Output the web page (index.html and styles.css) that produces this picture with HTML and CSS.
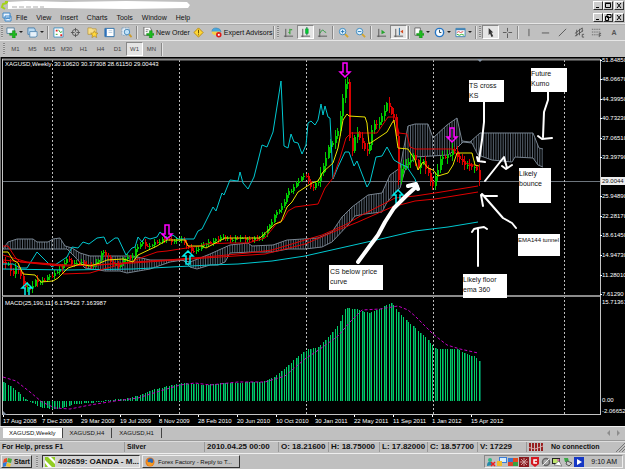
FILE: index.html
```html
<!DOCTYPE html>
<html lang="en">
<head>
<meta charset="utf-8">
<title>XAGUSD,Weekly</title>
<link rel="stylesheet" href="styles.css">
</head>
<body>
<header class="title">
  <svg class="scribble" viewBox="0 0 195 11"><path d="M7 3 3 4 2 7l3 2M5 2h3" stroke="#a4d21c" stroke-width="2" fill="none"/><path d="M8 2 26 1l40 1 60-1 61 1 3 3-2 3-62 1-82-1-36 1z" fill="#fff"/><path d="M12 7h32" stroke="#aaa" stroke-dasharray="5 2"/></svg>
  <div class="winbtns"><button aria-label="Minimize"><svg viewBox="0 0 8 7"><path d="M2 5.500h3"/></svg></button><button aria-label="Maximize"><svg viewBox="0 0 8 7"><path d="M1.500 1.500h5v4h-5zM1 1h6"/></svg></button><button class="apart" aria-label="Close"><svg viewBox="0 0 8 7"><path d="m2 1 4 5m0-5L2 6"/></svg></button></div>
</header>
<nav class="menu">
  <svg class="appicon" viewBox="0 0 10 10"><path d="M1 1h7v5H1zM3 4h6v5H3z" fill="#eef6ff" stroke="#3a86c8"/><path d="M4 7l2-1 2 1" stroke="#3a86c8" fill="none"/></svg>
  <button>File</button><button>View</button><button>Insert</button><button>Charts</button><button>Tools</button><button>Window</button><button>Help</button>
  <div class="winbtns"><button aria-label="Minimize chart"><svg viewBox="0 0 8 7"><path d="M2 5.500h3"/></svg></button><button aria-label="Restore chart"><svg viewBox="0 0 8 7"><path d="M3 .5h4v3H3zM1.500 2.500h3v4h-3z"/></svg></button><button class="apart" aria-label="Close chart"><svg viewBox="0 0 8 7"><path d="m2 1 4 5m0-5L2 6"/></svg></button></div>
</nav>
<div class="toolbar" role="toolbar">
  <i class="grip"></i>
  <button class="drop" aria-label="New chart"><svg viewBox="0 0 12 12"><path d="M1 1h8v6H1z" fill="#eef6fb" stroke="#5580a0"/><path d="M7 4h3v3h2v2h-2v3H7V9H4V7h3z" fill="#1dbb1d" stroke="#08790d" stroke-width=".5"/></svg></button>
  <button class="drop" aria-label="Profiles"><svg viewBox="0 0 12 12"><path d="M1 1h7l1 2v5H1z" fill="#b9daf2" stroke="#4a80ad"/><path d="M3 5h8v5l-2 1H3z" fill="#e7f1fa" stroke="#5a8db5"/></svg></button>
  <i class="sep"></i>
  <button aria-label="Market Watch"><svg viewBox="0 0 12 12"><path d="M1 1h10v10H1z" fill="#fff" stroke="#3f93c4"/><path d="M3 3h2v2H3zM8 8h2v2H8z" fill="#e02020"/><path d="M6 3l2 3 2-1M3 8h2" stroke="#2a2" fill="none"/></svg></button>
  <button aria-label="Data Window"><svg viewBox="0 0 12 12"><circle cx="6" cy="6" r="3.500" fill="none" stroke="#555"/><path d="M6 1v4M6 7v4M1 6h4M7 6h4" stroke="#555"/></svg></button>
  <button aria-label="Navigator"><svg viewBox="0 0 12 12"><path d="M1 1h4l1 1h4v6H1z" fill="#f8df8a" stroke="#b18b2c" stroke-width=".7"/><path d="m8 4 1.200 2.500 2.800.3-2 1.800.6 2.900L8 10l-2.600 1.500.6-2.900-2-1.800 2.800-.3z" fill="#ffd83a" stroke="#a37813" stroke-width=".6"/></svg></button>
  <button aria-label="Terminal"><svg viewBox="0 0 12 12"><path d="M1 1.500h10v9H1z" fill="#fff" stroke="#286da8"/><path d="M2 2v8" stroke="#2c70bb" stroke-width="2"/><path d="M5 4h4M5 6h4" stroke="#b8cddf"/></svg></button>
  <button aria-label="Strategy Tester"><svg viewBox="0 0 12 12"><path d="M1 1h8v8H1z" fill="#e4eef7" stroke="#7fa0bd" stroke-dasharray="2 1"/><circle cx="6.500" cy="5.500" r="3" fill="#bfe2fa" stroke="#4585b5"/><path d="m9 8 2.500 3" stroke="#cc9c2c" stroke-width="2"/></svg></button>
  <i class="sep"></i>
  <button class="wide"><svg viewBox="0 0 12 12"><path d="M1 0h6l2 2v7H1z" fill="#fff" stroke="#666"/><path d="M3 3h3M3 5h2" stroke="#777"/><path d="M7 4h3v3h2v2h-2v3H7V9H4V7h3z" fill="#1dbb1d" stroke="#08790d" stroke-width=".5"/></svg>New Order</button>
  <button aria-label="MetaEditor"><svg viewBox="0 0 12 12"><path d="m6 1 5 5-5 5-5-5z" fill="#ffd735" stroke="#b98908"/><path d="M6 3v4M6 8v1" stroke="#604800"/></svg></button>
  <button class="wide"><svg viewBox="0 0 12 12"><path d="M1 5q0-4 4.500-4T11 5L6 7z" fill="#48a7de" stroke="#2f78ab" stroke-width=".5"/><path d="M1 5h9v2q-4 4-9 0z" fill="#f1d14c"/><circle cx="8.500" cy="8.500" r="3" fill="#dc1b1b"/><path d="M7.500 7.500h2v2h-2z" fill="#fff"/></svg>Expert Advisors</button>
  <i class="sep"></i><i class="grip"></i>
  <button aria-label="Bar chart"><svg viewBox="0 0 12 12"><path class="ax" d="M3 2v9M1 10h10"/><path d="M7.500 2v6M6 6h1M8 3h2" stroke="#139b13"/></svg></button>
  <button class="on" aria-label="Candlesticks"><svg viewBox="0 0 12 12"><path class="ax" d="M3 2v9M1 10h10"/><path d="M7.500 0v9" stroke="#064"/><path d="M6 2h3v5H6z" fill="#0c3" stroke="#082" stroke-width=".5"/></svg></button>
  <button aria-label="Line chart"><svg viewBox="0 0 12 12"><path class="ax" d="M3 2v9M1 10h10"/><path d="M3 7q3-6 5-2l2 1" fill="none" stroke="#2a9a3a"/></svg></button>
  <i class="sep"></i>
  <button aria-label="Zoom in"><svg viewBox="0 0 12 12"><path d="m7 7 4 4" stroke="#d5a52d" stroke-width="2"/><circle cx="5" cy="5" r="3.500" fill="#e4f5ff" stroke="#3385bf"/><path d="M3 5h4M5 3v4" stroke="#2475b5"/></svg></button>
  <button aria-label="Zoom out"><svg viewBox="0 0 12 12"><path d="m7 7 4 4" stroke="#d5a52d" stroke-width="2"/><circle cx="5" cy="5" r="3.500" fill="#e4f5ff" stroke="#3385bf"/><path d="M3 5h4" stroke="#2475b5"/></svg></button>
  <i class="sep"></i>
  <button aria-label="Auto scroll"><svg viewBox="0 0 12 12"><path class="ax" d="M3 2v9M1 10h10"/><path d="m6 3 4 3-4 2z" fill="#24a42c"/></svg></button>
  <button class="on" aria-label="Chart shift"><svg viewBox="0 0 12 12"><path class="ax" d="M3 2v9M1 10h10"/><path d="M7 1v8" stroke="#17649c"/><path d="m8 5 3-2v4z" fill="#d34a20"/></svg></button>
  <i class="sep"></i>
  <button class="drop" aria-label="Indicators"><svg viewBox="0 0 12 12"><path d="M2 1h6v8H2z" fill="#fff" stroke="#666"/><path d="M7 4h3v3h2v2h-2v3H7V9H4V7h3z" fill="#1dbb1d" stroke="#08790d" stroke-width=".5"/></svg></button>
  <button class="drop" aria-label="Periods"><svg viewBox="0 0 12 12"><circle cx="6" cy="6" r="4.500" fill="#f6fbff" stroke="#2475c5" stroke-width="1.500"/><path d="M6 3v3h2" fill="none" stroke="#245"/></svg></button>
  <button class="drop" aria-label="Templates"><svg viewBox="0 0 12 12"><path d="M1 1.500h10v9H1z" fill="#fff" stroke="#4284b6"/><path d="M1 2.500h10" stroke="#4284b6" stroke-width="2"/><path d="m2 6 2-1 2 1 3-1" fill="none" stroke="#d44"/><path d="m2 8 3 1 2-1 3 1" fill="none" stroke="#2a2"/></svg></button>
  <i class="sep"></i><i class="grip"></i>
  <button class="on" aria-label="Cursor"><svg viewBox="0 0 12 12"><path d="m4 1 5 5H7l2 4-2 1-1.500-4L4 9z" fill="#333"/></svg></button>
  <button aria-label="Crosshair"><svg class="ln" viewBox="0 0 12 12"><path d="M6 1v4M6 7v5M1 6h4M7 6h4"/></svg></button>
  <i class="sep"></i>
  <button aria-label="Vertical line"><svg class="ln" viewBox="0 0 12 12"><path d="M6.500 2v8"/></svg></button>
  <button aria-label="Horizontal line"><svg class="ln" viewBox="0 0 12 12"><path d="M2 6.500h8"/></svg></button>
  <button aria-label="Trendline"><svg class="ln" viewBox="0 0 12 12"><path d="m2 10 8-8"/></svg></button>
  <button aria-label="Channel"><svg class="ln" viewBox="0 0 12 12"><path d="m1 7 8-6M1 10l9-6M3 3v7M6 2v7M9 1v4M9 8h2M9 11h2M9 8v3"/></svg></button>
  <button aria-label="Fibonacci"><svg class="ln" viewBox="0 0 12 12"><path d="M1 2.500h9M1 5.500h9M1 8.500h7" stroke-dasharray="1 1"/><path d="M9 11V7h2M9 9h2"/></svg></button>
  <button class="glyph">A</button>
</div>
<div class="frames" role="toolbar">
  <i class="grip"></i><button>M1</button><button>M5</button><button>M15</button><button>M30</button><button>H1</button><button>H4</button><button>D1</button><button class="on">W1</button><button>MN</button><i class="sep"></i>
</div>
<main>
  <svg id="chart" viewBox="0 57 625 369" role="img" aria-label="XAGUSD weekly chart">
    <rect y="57" width="625" height="369"/>
    <path d="M.5 57v369" stroke="#777"/>
    <g id="kumo"></g>
    <path d="M3 181.500h597" stroke="#6d757d"/>
    <path d="M52.500 60v355M179.500 60v355M306.500 60v355M433.500 60v355M564.500 60v355" stroke="#bbb" stroke-dasharray="2 2"/>
    <g id="candles" shape-rendering="crispEdges"></g>
    <g id="lines" fill="none"></g>
    <g id="macd" shape-rendering="crispEdges"></g>
    <g id="signals" fill="none" stroke-width="1.500"></g>
    <path d="M2 59.500h598M2 296h598" stroke="#8b8b8b" stroke-width="2"/>
    <path d="M2.500 59v237M2.500 297v118M600.500 59v356M2 414.500h599" fill="none" stroke="#c4c4c4"/>
    <path d="M477 59h6l-3 3z" fill="#8795a6"/>
    <path d="M3 411l4 4H3z" fill="#8795a6"/>
    <g id="axis" class="small"></g>
    <g class="small"><text x="5" y="66">XAGUSD,Weekly</text><text x="54" y="66">30.10620 30.37308 28.61150 29.00443</text><text x="5" y="305">MACD(25,190,11) 6.175423 7.163987</text></g>
    <g fill="#fff"><path d="M469 80h35v22h-35zM531 68h36v24h-36zM519 168h32v35h-32zM518 234h42v22h-42zM463 274h44v24h-44zM329 265h54v25h-54z"/></g>
    <g class="note"><text x="469" y="88">TS cross</text><text x="469" y="98">KS</text><text x="531" y="76">Future</text><text x="531" y="86">Kumo</text><text x="519" y="176">Likely</text><text x="519" y="186">bounce</text><text class="small dark" x="518" y="242">EMA144 tunnel</text><text x="463" y="282">Likely floor</text><text x="463" y="292">ema 360</text><text x="330" y="274">CS below price</text><text x="330" y="284">curve</text></g>
    <g class="pen"><path d="M484 102v20l-2 18-3 20M477 157l1 4 7 1"/><path d="M548 92v8l-4 12-1 25M538 136l4 3 10-1"/><path d="m485 181 19-24 3 11M502 166l4 3 6-4"/><path d="m516 228-4-5-9-5-21-24M483 206l-2-11 4 1h12"/><path d="M478 266v-38M472 232l2-3 4-1 6-1 3 2"/></g>
    <path class="pen thick" d="m358 262 11-15 9-12 7-13 9-14 13-13 10-9M408 186l8-2 2 5"/>
    <path d="M601 177h24v8h-24z" fill="#eee"/><text class="small dark" x="602" y="183">29.0044</text>
  </svg>
</main>
<nav class="tabs"><button class="active">XAGUSD,Weekly</button><button>XAGUSD,H4</button><button>XAGUSD,H1</button><span class="scroll"><svg viewBox="0 0 14 6"><path d="M3 0v6L0 3zM10 0l3 3-3 3z" fill="#8d8d8d"/></svg></span></nav>
<footer class="status">
  <span class="words">For Help, press F1</span><span class="words">Silver</span><span>2010.04.25 00:00</span><span>O: 18.21600</span><span>H: 18.75000</span><span>L: 17.82000</span><span>C: 18.57700</span><span>V: 17229</span>
  <span class="words conn"><svg viewBox="0 0 15 8"><path d="M1 0v8M4 0v8M7 0v8M10 0v8M13 0v8" stroke="#982020" stroke-width="2"/><path d="M0 4.500 6 6l8-3" stroke="#d9a5a5" fill="none"/></svg>No connection<svg class="size" viewBox="0 0 9 9"><path d="m0 9 9-9M3 9l6-6M6 9l3-3" stroke="#777"/></svg></span>
</footer>
<footer class="taskbar">
  <button class="start"><svg viewBox="0 0 10 10"><path d="m1 2 3-1v4L0 6z" fill="#e84b25"/><path d="m5 1 4 1-1 4-4-1z" fill="#48a93e"/><path d="m0 6 4-1-1 4-3 1z" fill="#3179d6"/><path d="m4 6 4 1-1 3-4-1z" fill="#f2c52c"/></svg>Start</button>
  <i class="grip"></i>
  <button class="task current"><svg viewBox="0 0 10 10"><path d="M0 0h10v10H0z" fill="#fff"/><path d="M0 0h3l7 7v3H7L0 3zM6 0h4v4zM0 6l3 4H0z" fill="#92cd25"/></svg>402659: OANDA - M...</button>
  <button class="task"><svg viewBox="0 0 10 10"><circle cx="5" cy="5" r="4.500" fill="#e67515"/><circle cx="5.500" cy="4" r="2.700" fill="#2866b5"/><path d="M1 3q1 3 4 2 2 2 4 0-1 4-4 4T1 3" fill="#f39b24"/></svg>Forex Factory - Reply to T...</button>
  <div class="tray">
    <svg viewBox="0 0 10 10"><circle cx="4" cy="3" r="2" fill="#3b8"/><path d="M1 9q0-5 4-4l3 3z" fill="#28a"/><path d="m5 5 4 4m0-4L5 9" stroke="#e22" stroke-width="1.500"/></svg>
    <svg viewBox="0 0 10 10"><path d="M2 0h8v6H2z" fill="#3b7dd8"/><path d="M3 1h6v4H3z" fill="#d9efff"/><path d="M0 4h5v5H0z" fill="#f1bd2b"/></svg>
    <svg viewBox="0 0 10 10"><path d="M0 1h5v4H0z" fill="#3978d0"/><path d="M5 1h5v4H5z" fill="#e44c20"/><path d="M0 5h5v4H0z" fill="#e0402b"/><path d="M5 5h5v4H5z" fill="#38a243"/></svg>
    <svg viewBox="0 0 10 10"><path d="M0 0h10v10H0z" fill="#8a1b20"/><path d="m2 2 6 6m0-6L2 8M5 1v8M1 5h8" stroke="#d0a0a0"/></svg>
    <svg viewBox="0 0 10 10"><path d="M1 0h8v7l-4 3-4-3z" fill="#d41820"/><path d="M7 3H4v3h3" stroke="#fff" stroke-width="1.500" fill="none"/></svg>
    <svg viewBox="0 0 10 10"><circle cx="5" cy="5" r="3.500" fill="#aaa" stroke="#666" stroke-width="1.500"/><path d="m2 8 6-6" stroke="#eee"/></svg>
    <svg viewBox="0 0 10 10"><path d="M0 1h8v6H0z" fill="#222"/><path d="M1 2h6v4H1z" fill="#bde46b"/><path d="m2 8 5-4 3 5z" fill="#fff" stroke="#555" stroke-width=".6"/><path d="M5 3h3" stroke="#d3c"/></svg>
    <svg viewBox="0 0 10 10"><path d="M1 1h4l1 4H2z" fill="#3aa845"/><path d="m4 4 5 2-3 3-3-2z" fill="#ccc" stroke="#555"/></svg>
    <svg viewBox="0 0 10 10"><path d="M0 0h10v10H0z" fill="#1537c4"/><path d="m3 2 5 3-5 3z" fill="#fff"/></svg>
    <time>9:10 AM</time>
  </div>
</footer>
<script src="chart.js"></script>
</body>
</html>
```
FILE: styles.css
```css
* { box-sizing: border-box; }
body { margin: 0; background: #c0c0c0; color: #111; font: 7px/1 "Liberation Sans", sans-serif; overflow-x: hidden; }
button { border: 0; padding: 0; background: none; color: inherit; font: inherit; white-space: nowrap; }
svg { display: block; flex: none; }
.title { height: 11px; display: flex; justify-content: space-between; align-items: center; }
.scribble { width: 195px; height: 11px; }
.winbtns { display: flex; margin-left: auto; padding-right: 1px; }
.winbtns button { width: 10px; height: 9px; background: #ccc; border: 1px solid; border-color: #fff #333 #333 #fff; }
.winbtns .apart { margin-left: 1px; }
.winbtns svg { width: 8px; height: 7px; fill: none; stroke: #000; }
.menu { height: 12px; display: flex; align-items: center; gap: 9px; }
.appicon { width: 10px; height: 10px; margin: 0 -5px 0 2px; }
.toolbar, .frames { display: flex; align-items: center; border-top: 1px solid #e6e6e6; }
.toolbar { height: 17px; box-shadow: inset 0 1px #aaa; }
.toolbar button { width: 17px; height: 14px; display: flex; align-items: center; justify-content: center; flex: none; }
.toolbar svg { width: 11px; height: 11px; }
.toolbar .drop { width: 21px; gap: 2px; }
.drop::after { content: ""; border: 2px solid transparent; border-top-color: #222; border-bottom: 0; }
.toolbar .wide { width: auto; gap: 2px; padding: 0 0 0 4px; }
.toolbar .on, .frames .on { background: #e4e4e4; border: 1px solid; border-color: #888 #fff #fff #888; }
.toolbar .glyph { color: #555; font-weight: bold; }
.ax { stroke: #555; fill: none; }
.ln { stroke: #555; fill: none; }
.grip { width: 2px; height: 12px; margin: 0 1px; flex: none; background: repeating-linear-gradient(#888 0 1px, #ccc 1px 2px); }
.sep { width: 2px; height: 13px; margin: 0 1px; flex: none; border-left: 1px solid #888; border-right: 1px solid #e4e4e4; }
.frames { height: 17px; font-size: 6px; color: #444; }
.frames button { width: 17px; height: 14px; }
.frames .grip { margin: 0 2px 0 3px; }
#chart { width: 100%; height: auto; }
.note { font-size: 7px; fill: #111; }
.small { font-size: 6px; fill: #fff; }
.dark { fill: #111; }
.pen { fill: none; stroke: #fff; stroke-width: 2; stroke-linecap: round; stroke-linejoin: round; }
.thick { stroke-width: 4; }
.tabs { height: 14px; display: flex; align-items: flex-start; padding: 1px 4px 0 3px; border-top: 1px solid #eee; background: #c0c0c0; font-size: 6px; }
.tabs button { height: 10px; padding: 0 7px; border-right: 1px solid #444; }
.tabs .active { background: #fff; padding: 0 6px; }
.scroll { margin: 2px 0 0 auto; }
.scroll svg { width: 14px; height: 6px; }
.status { height: 13px; display: grid; grid-template-columns: 124fr 80fr 74fr 50fr 51fr 48fr 50fr 49fr 99fr; align-items: center; border-top: 1px solid #999; box-shadow: inset 0 1px #ddd; font-weight: bold; font-size: 8px; white-space: nowrap; }
.status span { height: 10px; line-height: 10px; padding-left: 2px; border-left: 1px solid #999; }
.status span:first-child { border: 0; }
.status .words { font-size: 7px; }
.status .conn { display: flex; align-items: center; gap: 7px; }
.conn svg { width: 15px; height: 8px; }
.conn .size { width: 9px; height: 9px; margin-left: auto; }
.taskbar { height: 16px; display: flex; align-items: center; gap: 2px; padding: 0 2px 0 1px; border-top: 1px solid #eee; }
.taskbar button { height: 13px; display: flex; align-items: center; gap: 3px; padding: 0 2px; border: 1px solid; border-color: #eee #333 #333 #eee; }
.taskbar svg { width: 10px; height: 10px; }
.taskbar .start { width: 31px; gap: 1px; padding: 0 1px; font-weight: bold; }
.taskbar .grip { margin: 0 2px; }
.taskbar .task { width: 98px; font-size: 6px; }
.taskbar .current { border-color: #333 #eee #eee #333; background: #d4d4d4; font-weight: bold; font-size: 8px; }
.tray { height: 13px; margin-left: auto; display: flex; align-items: center; gap: 1px; padding: 0 5px 0 1px; border: 1px solid; border-color: #888 #eee #eee #888; }
.tray time { margin-left: 6px; }
```
FILE: chart.js
```js
const NS = "http://www.w3.org/2000/svg";
const STEP = 2.44;
function add(parent, tag, attrs, text) {
  const el = document.createElementNS(NS, tag);
  for (const key in attrs) el.setAttribute(key, attrs[key]);
  if (text) el.textContent = text;
  document.getElementById(parent).appendChild(el);
}
function parse(s) { return s.trim().split(/\s+/).map(p => p.split(",").map(Number)); }
function at(points, x) {
  if (x <= points[0][0]) return points[0][1];
  for (let i = 1; i < points.length; i++) {
    const [x0, y0] = points[i - 1], [x1, y1] = points[i];
    if (x <= x1) return y0 + (y1 - y0) * (x - x0) / (x1 - x0);
  }
  return points[points.length - 1][1];
}

// Cloud
const spanA = "3,249 8,242 17,239 33,239 37,242 48,242 53,239 60,238 65,246 72,248 80,253 90,256 133,256 150,260 180,260 190,262 200,258 210,254 230,245 248,243 252,246 273,245 287,240 318,238 332,232 342,217 352,207 368,195 382,193 390,175 400,168 408,126 415,124 428,124 433,138 447,125 457,118 462,141 470,142 480,133 533,133 539,148 543,149";
const spanB = "3,249 67,249 75,257 85,268 105,271 120,271 127,273 150,269 170,262 183,260 190,267 197,269 210,265 218,265 225,262 230,253 252,252 272,252 288,249 305,249 322,247 332,242 348,225 355,216 365,214 382,212 387,202 400,188 405,170 415,157 448,155 455,150 463,142 472,143 478,155 492,160 512,162 515,157 533,158 538,165 543,167";
const A = parse(spanA), B = parse(spanB);
for (let x = 3; x <= 543; x += STEP) {
  add("kumo", "path", { d: `M${x.toFixed(1)} ${at(A, x).toFixed(1)}V${at(B, x).toFixed(1)}`, stroke: "#56616d" });
}
for (const s of [spanA, spanB]) add("kumo", "polyline", { points: s, fill: "none", stroke: "#77838f" });

// Candles
const close = parse("3,262 8,265 12,275 16,266 19,272 22,284 27,288 31,288 34,281 40,282 46,278 53,275 60,268 67,258 72,264 80,262 90,267 97,262 102,251 107,257 112,264 118,266 125,258 131,258 137,246 142,243 148,247 153,243 160,241 167,238 173,242 180,238 186,246 194,252 199,247 205,244 213,241 222,237 230,240 238,238 248,240 260,238 267,229 275,214 281,207 287,193 292,189 298,180 305,174 309,185 313,188 318,180 323,165 328,146 333,142 338,128 342,100 345,80 347,82 350,150 352,150 356,130 362,145 368,153 372,125 377,125 382,115 386,103 391,113 395,120 398,180 402,165 408,163 413,155 418,168 422,160 428,175 432,187 437,170 440,158 450,155 451,147 456,155 464,164 470,166 476,168 479,180");
let previous = 262;
for (let i = 0; i < 196; i++) {
  const x = 3 + i * STEP;
  const y = at(close, x) + Math.sin(i * 2.3);
  const top = Math.min(previous, y), bottom = Math.max(previous, y);
  const color = y < previous ? "#00c800" : "#d80000";
  const wick = 1 + Math.abs(Math.sin(i * 1.7)) * (x > 320 ? 5 : x < 40 ? 4 : 2);
  add("candles", "rect", { x: Math.round(x), y: top - wick, width: 1, height: bottom - top + wick * 2, fill: color });
  add("candles", "rect", { x: Math.round(x), y: top, width: 2, height: Math.max(1, bottom - top), fill: color });
  previous = y;
}

// Indicator lines
const lines = [
  ["#00c8d0", "3,264 13,264 20,268 27,268 37,252 52,267 67,257 72,247 78,248 83,242 89,244 97,238 104,237 107,244 115,238 118,238 126,255 132,248 135,247 138,237 142,242 145,237 150,239 157,237 160,232 167,238 173,235 178,239 194,239 198,231 202,229 205,223 213,207 216,211 222,193 224,195 230,180 238,181 240,172 243,183 248,189 254,177 262,145 267,147 273,132 281,81 284,146 288,148 291,134 294,142 298,143 302,154 306,145 308,123 311,121 315,125 318,120 321,104 323,115 325,106 328,117 330,118 333,179 338,167 345,152 349,152 354,166 357,161 367,187 370,182 376,157 382,156 387,147 394,160 399,163 407,167 415,179 418,188"],
  ["#00c8d0", "3,269 67,270 133,269 210,265 238,264 272,261 305,256 345,247 385,238 415,231 448,227 478,222"],
  ["#e00000", "3,255 27,262 67,265 100,265 133,262 167,260 205,257 248,253 272,250 305,240 322,235 345,225 362,215 395,198 415,196 435,193 478,186"],
  ["#e00000", "3,260 67,266 133,263 205,258 265,254 305,244 338,230 358,222 392,207 415,201 435,199 478,192"],
  ["#e00000", "3,246 8,246 15,257 20,262 50,265 62,266 63,274 90,273 100,270 133,261 143,257 157,252 167,251 180,249 200,246 205,244 230,243 248,243 265,238 277,223 283,220 288,211 295,207 318,204 325,188 333,178 340,158 346,138 351,133 377,133 388,117 395,117 399,133 407,134 410,147 415,149 453,149 457,155 465,163 478,166"],
  ["#e8e000", "3,252 8,252 13,260 18,263 23,274 35,275 41,282 53,281 58,278 68,268 80,264 90,266 100,263 107,260 123,259 133,262 138,255 157,246 167,240 185,240 188,246 202,246 206,248 225,238 260,238 275,224 281,222 287,207 292,202 298,192 312,183 318,181 323,172 333,163 338,148 343,120 347,114 349,116 365,117 367,123 369,144 378,138 387,132 392,123 394,120 398,148 408,149 415,160 418,170 423,162 428,168 433,170 438,176 448,173 453,165 457,153 472,153 475,165 479,166"]
];
for (const [stroke, points] of lines) add("lines", "polyline", { points, stroke });

// MACD histogram and its signal line
const macd = parse("3,382 13,388 25,399 30,402 42,408 55,409 62,408 75,404 100,402 105,400 125,399 140,395 152,390 168,386 182,383 205,385 225,383 262,382 272,378 285,368 298,356 308,349 318,347 328,337 338,325 345,308 357,309 368,313 380,308 392,303 397,311 407,321 415,328 425,337 431,344 436,349 457,349 468,355 474,356 479,361");
for (let i = 0; i < 196; i++) {
  const x = 3 + i * STEP, y = Math.round(at(macd, x));
  add("macd", "rect", { x: Math.round(x), y: Math.min(y, 401), width: 1, height: Math.max(1, Math.abs(401 - y)), fill: "#0c6" });
  if (i % 3 === 0) add("macd", "rect", { x: Math.round(x) + 1, y: Math.min(y, 401), width: 1, height: Math.max(1, Math.abs(401 - y)), fill: "#064" });
}
add("signals", "polyline", { points: "3,377 16,381 30,392 42,402 55,408 70,409 90,405 115,401 138,398 160,391 180,385 195,383 210,385 238,382 265,382 285,376 305,359 320,349 338,336 350,322 362,310 380,309 398,306 408,310 415,316 433,334 447,345 460,349 478,353", stroke: "#c000c0", "stroke-width": 1, "stroke-dasharray": "3 2" });

// Signal arrows
for (const [x, y] of [[167, 239], [345, 77], [452, 142]]) add("signals", "path", { d: `M${x} ${y}l-5-5h3v-9h4v9h3z`, stroke: "#f0f" });
for (const [x, y] of [[27, 283], [188, 251], [398, 190]]) add("signals", "path", { d: `M${x} ${y}l-5 5h3v8h4v-8h3z`, stroke: "#0ee" });

// Axes
const prices = [["51.84850", 60], ["48.06670", 79], ["44.39950", 99], ["40.73230", 118], ["37.06510", 138], ["33.39790", 157], ["25.94890", 196], ["22.28170", 216], ["18.61450", 235], ["14.94730", 255], ["11.28010", 275], ["7.61290", 294], ["15.71361", 302], ["0.00", 400], ["-2.06652", 411]];
for (const [label, y] of prices) {
  add("axis", "text", { x: 602, y: y + 2 }, label);
  if (y < 300) add("axis", "rect", { x: 600, y, width: 2, height: 1 });
}
["17 Aug 2008", "7 Dec 2008", "29 Mar 2009", "19 Jul 2009", "8 Nov 2009", "28 Feb 2010", "20 Jun 2010", "10 Oct 2010", "30 Jan 2011", "22 May 2011", "11 Sep 2011", "1 Jan 2012", "15 Apr 2012"].forEach((label, i) => {
  const x = Math.round(3 + i * 16 * STEP);
  add("axis", "rect", { x, y: 415, width: 1, height: 2 });
  add("axis", "text", { x, y: 423 }, label);
});
```
